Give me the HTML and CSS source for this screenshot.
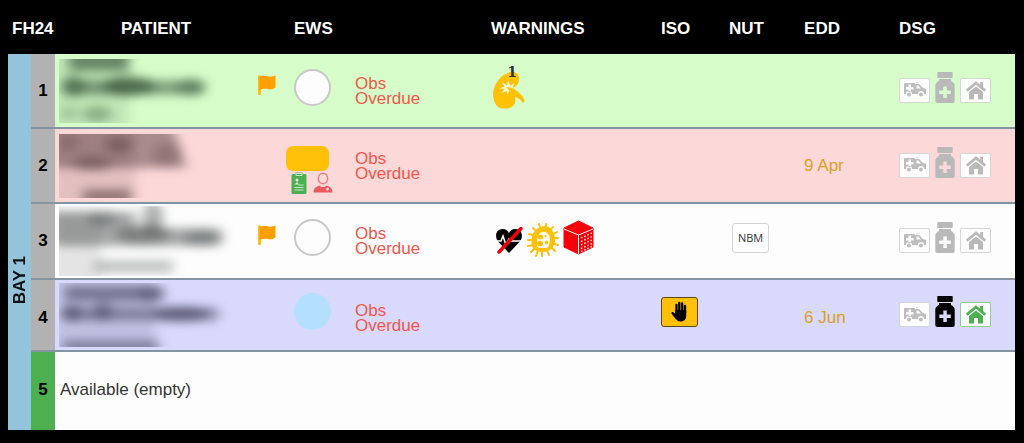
FILE: index.html
```html
<!DOCTYPE html>
<html lang="en">
<head>
<meta charset="utf-8">
<meta name="viewport" content="width=device-width, initial-scale=1">
<title>FH24 ward board</title>
<link rel="stylesheet" href="styles.css">
</head>
<body>
<svg class="defs" width="0" height="0" aria-hidden="true">
  <filter id="soft" x="-20%" y="-30%" width="140%" height="160%" color-interpolation-filters="sRGB"><feGaussianBlur stdDeviation="6 5"/></filter>
  <symbol id="flag" viewBox="0 0 18 20">
    <path fill="#ffc107" d="M0 1.500a1.500 1.500 0 0 1 3 0V19a1 1 0 0 1-1 1H1a1 1 0 0 1-1-1z"/>
    <path fill="#ffa000" d="M1.500 2C5-.2 8 1 10.500 1.500 13 2 15 1.200 17.500.5v12c-3 2-5 2.200-7.500 1.600-3-.8-5-.6-8.500.9z"/>
  </symbol>
  <symbol id="ambulance" viewBox="0 0 24 16">
    <path fill="#bdbdbd" fill-rule="evenodd" d="M2 1h10v1h4l4 4 3 1v5h-2a3 3 0 0 0-6 0H9a3 3 0 0 0-6 0H1V2a1 1 0 0 1 1-1zM5.500 2.500v2.500H3v2.500h2.500V10H8V7.500h2.500V5H8V2.500zM13.500 3.500v3h4.500l-2.800-3z"/>
    <circle cx="6" cy="12.500" r="1.900" fill="#bdbdbd"/><circle cx="18" cy="12.500" r="1.900" fill="#bdbdbd"/>
    <path fill="#ddd" d="M13 0h2v1.500h-2z"/>
  </symbol>
  <symbol id="bottle" viewBox="0 0 20 31">
    <path fill="currentColor" fill-rule="evenodd" d="M3 0h14a.7.7 0 0 1 .7.700v4.600a.7.700 0 0 1-.7.700H3a.7.700 0 0 1-.7-.7V.7A.7.700 0 0 1 3 0zM4 7h12v2c2 1 3.700 2.500 3.700 4.500V29a2 2 0 0 1-2 2H2.300a2 2 0 0 1-2-2V13.500C.3 11.500 2 10 4 9zM8.300 14.500v4h-4v3.500h4v4h3.500v-4h4v-3.500h-4v-4z"/>
  </symbol>
  <symbol id="home" viewBox="0 0 20 19">
    <path fill="currentColor" d="M10 5.500 17 11v7.500h-5V13H8v5.500H3V11z"/>
    <path fill="none" stroke="currentColor" stroke-width="2.700" d="M.8 9.700 10 2l9.200 7.700"/>
    <path fill="currentColor" d="M14.200 1h2.800v6.500l-2.800-2.300z"/>
  </symbol>
</svg>

<main class="board">
<table class="ward">
  <colgroup>
    <col class="c-bay"><col class="c-bed"><col class="c-patient"><col class="c-flag"><col class="c-score"><col class="c-obs"><col class="c-warn"><col class="c-iso"><col class="c-nut"><col class="c-edd"><col class="c-dsg">
  </colgroup>
  <thead>
    <tr>
      <th colspan="2" class="ward-name">FH24</th>
      <th colspan="2" class="patient-head">PATIENT</th>
      <th colspan="2">EWS</th>
      <th>WARNINGS</th>
      <th>ISO</th>
      <th>NUT</th>
      <th>EDD</th>
      <th>DSG</th>
    </tr>
  </thead>
  <tbody>
    <tr class="row green">
      <th class="bay" rowspan="5" scope="rowgroup"><span>BAY 1</span></th>
      <th class="bed" scope="row">1</th>
      <td class="patient">
        <svg class="mask" viewBox="0 0 190 64" role="img" aria-label="Name hidden">
          <g filter="url(#soft)" fill="#2b4a30">
            <rect x="-8" y="-8" width="78" height="80" opacity=".12"/>
            <rect x="10" y="-12" width="60" height="24" opacity=".6"/>
            <ellipse cx="14" cy="27" rx="12" ry="11" opacity=".45"/>
            <ellipse cx="70" cy="27" rx="26" ry="10" opacity=".6"/>
            <rect x="4" y="21" width="142" height="15" rx="7" opacity=".5"/>
            <ellipse cx="132" cy="28" rx="14" ry="9" opacity=".35"/>
            <ellipse cx="10" cy="54" rx="9" ry="7" opacity=".22"/>
            <ellipse cx="38" cy="55" rx="15" ry="8" opacity=".35"/>
          </g>
        </svg>
      </td>
      <td class="flag"><svg class="flag-icon" role="img" aria-label="Flag"><use href="#flag"/></svg></td>
      <td class="score"><span class="ews ring"></span></td>
      <td class="obs">Obs<br>Overdue</td>
      <td class="icons">
        <svg class="kidney" viewBox="0 0 34 44" role="img" aria-label="Acute kidney injury stage 1">
          <path fill="#ffc107" d="M15 9C20 5 27 7 28 12c.5 4-.5 7-3 9l-3 2c5 4 9 6 11 11 1 2 .8 4-1.500 3.500C30 35 28 33 24 32c1 4 0 7-2 9-4 3-9 3-13 2C4 41 2 34 2 28 3 20 8 12 15 9z"/>
          <path fill="#eefcd4" d="m11 17 5 3.500 1-5 2.500 5.500 4-3-2 5.500-3 2-2 4-1-3.500-5 2 3-4-5-.5 5-2z"/>
          <path fill="#ffc107" d="m15 22 5 .5 7 7-7-2z"/>
          <text x="21" y="12" class="kidney-stage">1</text>
        </svg>
      </td>
      <td></td><td></td><td></td>
      <td class="icons"><div class="dsg">
        <span class="tile"><svg class="amb" role="img" aria-label="Transport"><use href="#ambulance"/></svg></span>
        <svg class="bottle" role="img" aria-label="Medication"><use href="#bottle"/></svg>
        <span class="tile"><svg class="home" role="img" aria-label="Home"><use href="#home"/></svg></span>
      </div></td>
    </tr>
    <tr class="row pink">
      <th class="bed" scope="row">2</th>
      <td class="patient">
        <svg class="mask" viewBox="0 0 190 64" role="img" aria-label="Name hidden">
          <g filter="url(#soft)" fill="#492f32">
            <rect x="-8" y="-8" width="84" height="80" opacity=".14"/>
            <path d="M-8-12H112L128 34H-8z" opacity=".45"/>
            <ellipse cx="60" cy="11" rx="14" ry="8" opacity=".4"/>
            <ellipse cx="8" cy="9" rx="12" ry="7" opacity=".25"/>
            <ellipse cx="33" cy="30" rx="20" ry="7" opacity=".4"/>
            <ellipse cx="108" cy="20" rx="14" ry="12" opacity=".25"/>
            <rect x="24" y="55" width="48" height="16" opacity=".5"/>
          </g>
        </svg>
      </td>
      <td></td>
      <td class="score">
        <div class="stack">
          <span class="amber"></span>
          <div class="pair">
            <svg class="mini" viewBox="0 0 18 22" role="img" aria-label="Care plan">
              <path fill="#4caf50" d="M3 2h2.500V.5h7V2H15a1.500 1.500 0 0 1 1.500 1.500v17A1.500 1.500 0 0 1 15 22H3a1.500 1.500 0 0 1-1.500-1.500v-17A1.500 1.500 0 0 1 3 2z"/>
              <path fill="none" stroke="#c8e8c9" stroke-width="1" d="M6 1.500h6v2H6zM8.500 13h5M4.500 15.500h9M4.500 18h9"/>
              <circle cx="7" cy="8" r="1.500" fill="#e0f2e0"/><path fill="#e0f2e0" d="M4.500 12.500 7 10l2 2.500z"/>
            </svg>
            <svg class="mini" viewBox="0 0 20 22" role="img" aria-label="Clinician">
              <ellipse cx="10" cy="6.500" rx="4.700" ry="5.200" fill="none" stroke="#f08080" stroke-width="1.400"/>
              <path fill="#e85b5f" d="M.5 20.500c0-4 2-5.500 6-7 2 2 5 2 7 0 4 1.500 6 3 6 7z"/>
              <path stroke="#fcd8d8" stroke-width="1.300" d="M14.500 15.500v3M13 17h3"/>
            </svg>
          </div>
        </div>
      </td>
      <td class="obs">Obs<br>Overdue</td>
      <td></td><td></td><td></td>
      <td class="edd">9 Apr</td>
      <td class="icons"><div class="dsg">
        <span class="tile"><svg class="amb" role="img" aria-label="Transport"><use href="#ambulance"/></svg></span>
        <svg class="bottle" role="img" aria-label="Medication"><use href="#bottle"/></svg>
        <span class="tile"><svg class="home" role="img" aria-label="Home"><use href="#home"/></svg></span>
      </div></td>
    </tr>
    <tr class="row white tall">
      <th class="bed" scope="row">3</th>
      <td class="patient">
        <svg class="mask" viewBox="0 0 190 70" role="img" aria-label="Name hidden">
          <g filter="url(#soft)" fill="#303434">
            <rect x="-8" y="4" width="50" height="80" opacity=".12"/>
            <rect x="-8" y="6" width="84" height="16" opacity=".42"/>
            <ellipse cx="44" cy="13" rx="14" ry="8" opacity=".3"/>
            <ellipse cx="94" cy="12" rx="10" ry="16" opacity=".4"/>
            <rect x="-8" y="22" width="172" height="18" rx="8" opacity=".42"/>
            <ellipse cx="84" cy="28" rx="28" ry="10" opacity=".35"/>
            <ellipse cx="142" cy="32" rx="18" ry="8" opacity=".3"/>
            <rect x="36" y="54" width="78" height="13" opacity=".28"/>
          </g>
        </svg>
      </td>
      <td class="flag"><svg class="flag-icon" role="img" aria-label="Flag"><use href="#flag"/></svg></td>
      <td class="score"><span class="ews ring"></span></td>
      <td class="obs">Obs<br>Overdue</td>
      <td class="icons"><div class="warnings">
        <svg class="heart" viewBox="0 0 28 28" role="img" aria-label="Not for resuscitation">
          <path fill="#000" d="M14 27 3.500 16C-1 11 1 3 7.500 3 11 3 13 5 14 7c1-2 3-4 6.500-4C27 3 29 11 24.500 16z"/>
          <path fill="none" stroke="#fff" stroke-width="1.500" d="M0 15h6l2-5 3 9 3-6 2 2h12"/>
          <path stroke="#f00008" stroke-width="3.500" stroke-linecap="round" d="M4 26 26 2.500"/>
        </svg>
        <svg class="germ" viewBox="0 0 32 34" role="img" aria-label="Infection">
          <path stroke="#ffc107" stroke-width="2" stroke-linecap="round" d="M12 1l2 6M19 1v5M26 4l-3 4M30 9l-5 3M31 15h-6M31 22l-6-2M28 28l-4-4M22 32l-2-5M15 33v-5M9 33l2-6M4 29l4-4M1 23l6-1M1 17h6M2 11l6 2M6 5l4 4"/>
          <path fill="#ffc107" d="M12 5c4-3 12-2 14 4 3 5 3 12-1 16-4 5-12 5-17 2-4-3-4-9-3-14 1-4 4-7 7-8z"/>
          <path fill="#fffdf2" d="M15 9c5-1 8 3 8 8-1 3 0 7-4 8-4 0-9 1-9-3 0-4 0-11 5-13z"/>
          <g fill="#ffc107"><ellipse cx="13.500" cy="14" rx="2.700" ry="2.300"/><ellipse cx="13" cy="20.500" rx="3" ry="2.800"/><ellipse cx="19.500" cy="19.500" rx="1.600" ry="2"/><circle cx="18.500" cy="13" r="1"/></g>
        </svg>
        <svg class="cube" viewBox="0 0 31 35" role="img" aria-label="Falls risk">
          <path fill="#f80008" stroke="#f80008" stroke-linejoin="round" d="M15.500 1 30 8v19l-14.500 7L1 27V8z"/>
          <path fill="none" stroke="#fff" d="m1 9 14.500 6L30 9M15.500 15v19"/>
          <path fill="none" stroke="#fff" stroke-width="1.300" stroke-dasharray="1.500 2" d="m18 18 11-5M18 21.500l11-5M18 25l11-5M18 28.500l11-5M18 31.500l11-5"/>
        </svg>
      </div></td>
      <td></td>
      <td class="icons"><span class="nbm">NBM</span></td>
      <td></td>
      <td class="icons"><div class="dsg">
        <span class="tile"><svg class="amb" role="img" aria-label="Transport"><use href="#ambulance"/></svg></span>
        <svg class="bottle" role="img" aria-label="Medication"><use href="#bottle"/></svg>
        <span class="tile"><svg class="home" role="img" aria-label="Home"><use href="#home"/></svg></span>
      </div></td>
    </tr>
    <tr class="row lilac">
      <th class="bed" scope="row">4</th>
      <td class="patient">
        <svg class="mask" viewBox="0 0 190 64" role="img" aria-label="Name hidden">
          <g filter="url(#soft)" fill="#2d2d48">
            <rect x="-4" y="-6" width="100" height="80" opacity=".14"/>
            <rect x="5" y="3" width="100" height="15" rx="6" opacity=".5"/>
            <ellipse cx="92" cy="12" rx="12" ry="8" opacity=".25"/>
            <ellipse cx="12" cy="30" rx="11" ry="9" opacity=".4"/>
            <ellipse cx="44" cy="28" rx="9" ry="10" opacity=".4"/>
            <rect x="4" y="24" width="156" height="14" rx="6" opacity=".42"/>
            <ellipse cx="122" cy="31" rx="28" ry="8" opacity=".45"/>
            <rect x="4" y="57" width="96" height="14" opacity=".42"/>
          </g>
        </svg>
      </td>
      <td></td>
      <td class="score"><span class="ews blue"></span></td>
      <td class="obs">Obs<br>Overdue</td>
      <td></td>
      <td class="icons"><span class="iso">
        <svg class="hand" viewBox="0 0 17 21" role="img" aria-label="Isolation">
          <path d="M5.500 12V4M8.300 11V2M11.200 11V2.500M14 12V5" stroke="#000" stroke-width="2.300" stroke-linecap="round"/>
          <path d="M4.300 9h10.900v6c0 3-2 5.500-5.500 5.500C6 20.500 4 17 .5 12.500c-.5-1 1-2 2-1l1.800 1.200z"/>
        </svg>
      </span></td>
      <td></td>
      <td class="edd">6 Jun</td>
      <td class="icons"><div class="dsg">
        <span class="tile"><svg class="amb" role="img" aria-label="Transport"><use href="#ambulance"/></svg></span>
        <svg class="bottle done" role="img" aria-label="Medication ready"><use href="#bottle"/></svg>
        <span class="tile ready"><svg class="home" role="img" aria-label="Home ready"><use href="#home"/></svg></span>
      </div></td>
    </tr>
    <tr class="row white last">
      <th class="bed free" scope="row">5</th>
      <td class="available" colspan="9">Available (empty)</td>
    </tr>
  </tbody>
</table>
</main>
</body>
</html>
```
FILE: styles.css
```css
* { box-sizing: border-box; }
body {
  margin: 0;
  background: #000;
  color: #333;
  font-family: "Liberation Sans", Arial, sans-serif;
  font-size: 17px;
}
svg { display: block; }
.defs { position: absolute; }
.board { padding: 0 9px 13px 8px; }

.ward {
  width: 100%;
  table-layout: fixed;
  border-collapse: separate;
  border-spacing: 0;
}
.c-bay { width: 23px; }
.c-bed { width: 24px; }
.c-patient { width: 195px; }
.c-flag { width: 36px; }
.c-score { width: 61px; }
.c-obs { width: 136px; }
.c-warn { width: 170px; }
.c-iso { width: 68px; }
.c-nut { width: 75px; }
.c-edd { width: 95px; }
.c-dsg { width: 124px; }

thead th {
  height: 54px;
  padding: 4px 0 0 8px;
  color: #fff;
  text-align: left;
}
thead .ward-name { padding-left: 4px; }
thead .patient-head { padding-left: 66px; }

.row { height: 75px; }
.row.tall { height: 76px; }
.row.lilac { height: 72px; }
.row.last { height: 78px; }
.row td, .bed {
  padding: 0 0 0 8px;
  border-bottom: 2px solid #8494a2;
  vertical-align: middle;
}
.green td { background: #d6fdc9; }
.pink td { background: #fcd8d8; }
.white td { background: #fdfdfd; }
.lilac td { background: #d9d9fb; }
.row.last td, .row.last .bed { border-bottom: 0; }

.row .bay {
  padding: 76px 0 0;
  background: #94c3dc;
  color: #111;
  vertical-align: middle;
}
.bay span {
  display: block;
  margin: 0 auto;
  width: 20px;
  line-height: 20px;
  writing-mode: vertical-rl;
  transform: rotate(180deg);
}
.row .bed {
  padding: 0;
  background: #b2b2b2;
  color: #000;
  text-align: center;
}
.row .free { background: #4caf50; padding-bottom: 2px; }

.row .patient { padding-left: 4px; }
.mask { width: 190px; height: 64px; overflow: hidden; }
.tall .mask { height: 70px; }

.row .flag { padding-bottom: 12px; }
.flag-icon { width: 18px; height: 20px; }
.row .score, .row .icons { padding-bottom: 7px; }
.row .obs { color: #f4564c; line-height: 15px; }
.row .edd { color: #d8a128; }
.lilac .obs, .lilac .edd, .lilac .bed { padding-top: 5px; }
.row .available { padding-left: 5px; padding-bottom: 2px; }

.ews {
  display: block;
  width: 37px;
  height: 37px;
  border-radius: 50%;
}
.ring { background: #fdfdfd; border: 2px solid #c8c8c8; }
.blue { background: #b5e0fd; }
.pink .score { padding: 8px 0 0; }
.stack { display: flex; flex-direction: column; gap: 1px; }
.amber { width: 43px; height: 25px; border-radius: 7px; background: #ffc107; }
.pair { display: flex; gap: 4px; padding-left: 3px; }
.mini { width: 20px; height: 22px; }

.kidney { width: 34px; height: 44px; }
.kidney-stage { font: bold 14px "DejaVu Serif", serif; text-anchor: middle; fill: #333; }
.warnings { display: flex; align-items: center; gap: 4px; padding-left: 4px; }
.heart { width: 28px; height: 28px; margin-top: 4px; }
.germ { width: 32px; height: 34px; margin-top: 4px; }
.cube { width: 31px; height: 35px; }

.nbm, .iso {
  display: flex;
  align-items: center;
  justify-content: center;
  width: 37px;
  height: 30px;
  border-radius: 3px;
}
.nbm {
  margin-left: 3px;
  border: 1px solid #d4d4d4;
  background: #fff;
  font: 11px "Open Sans", sans-serif;
}
.iso { border: 1px solid #5c4a22; background: #ffc107; }
.hand { width: 17px; height: 21px; }

.dsg { display: flex; align-items: flex-end; gap: 5px; color: #b9b9b9; }
.tile {
  display: flex;
  align-items: center;
  justify-content: center;
  width: 31px;
  height: 25px;
  border: 1px solid #d5d5d5;
  border-radius: 2px;
  background: #fdfdfd;
}
.amb { width: 24px; height: 16px; }
.bottle { width: 20px; height: 31px; }
.home { width: 20px; height: 19px; }
.done { color: #000; }
.ready { border-color: #8fce91; color: #4caf50; }
```
